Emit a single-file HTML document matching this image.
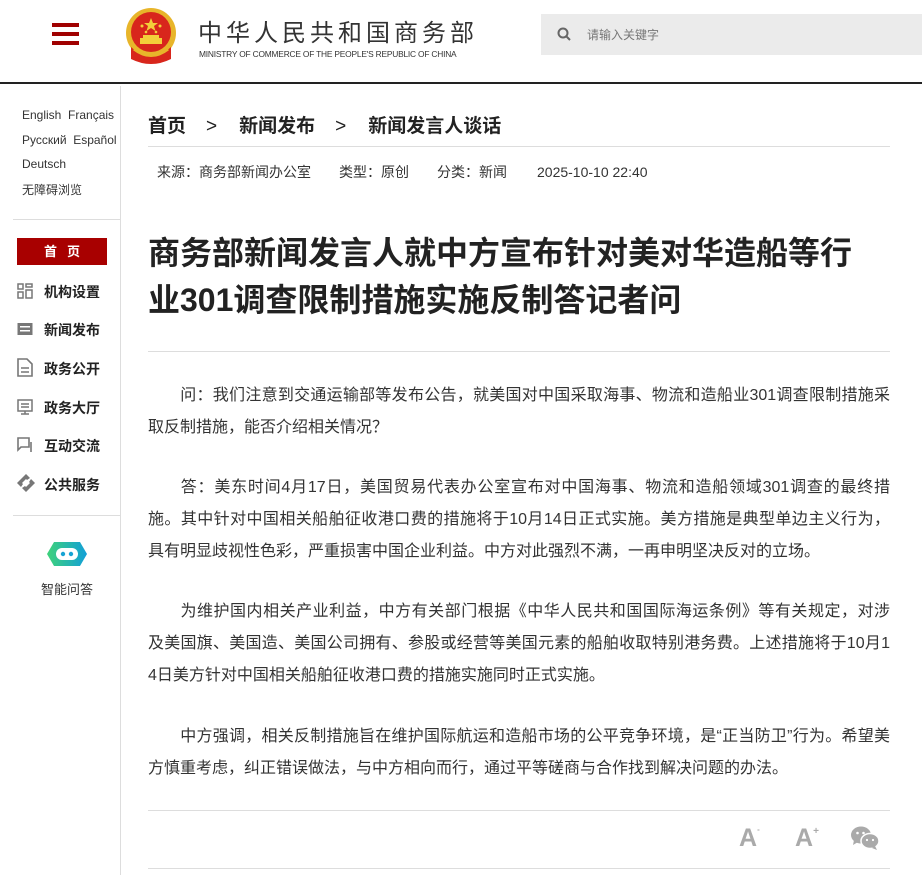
<!DOCTYPE html>
<html><head><meta charset="utf-8"><style>
*{margin:0;padding:0;box-sizing:border-box}
body{width:922px;height:875px;overflow:hidden;background:#fff;font-family:"Liberation Sans","Noto Sans CJK SC",sans-serif;color:#333;position:relative}
.abs{position:absolute}
.hdr{left:0;top:0;width:922px;height:84px;border-bottom:2px solid #222}
.burger span{position:absolute;left:52px;width:27px;height:4px;background:#a00000}
.logo-cn{left:198px;top:13px;font-size:24px;letter-spacing:4px;color:#333;white-space:nowrap}
.logo-en{left:199px;top:49px;font-size:8.4px;color:#333;white-space:nowrap;letter-spacing:-0.2px}
.search{left:541px;top:14px;width:381px;height:41px;background:#ebebeb}
.search .ph{position:absolute;left:46px;top:12px;font-size:12px;color:#777}
.vline{left:120px;top:86px;width:1px;height:789px;background:#ddd}
.lang{left:22px;font-size:12px;color:#333;white-space:nowrap}
.sep{left:13px;width:107px;height:1px;background:#ddd}
.home{left:17px;top:238px;width:90px;height:27px;background:#a80000;color:#fff;font-size:13px;font-weight:bold;text-align:center;line-height:27px;letter-spacing:10px;text-indent:10px}
.nav{left:44px;font-size:14px;font-weight:bold;color:#222;white-space:nowrap}
.ico{left:17px}
.crumb{left:148px;top:111px;font-size:19px;font-weight:bold;color:#222;white-space:nowrap}
.meta{left:157px;top:162px;font-size:14px;color:#333;white-space:nowrap}
.title{left:148px;top:230px;width:740px;font-size:32px;font-weight:bold;line-height:47px;color:#222}
.hl{left:148px;width:742px;height:1px;background:#ddd}
.p{left:148px;width:742px;font-size:16px;line-height:32px;color:#333}
.p div{text-align:justify;text-align-last:justify;white-space:nowrap}
.p div.l{text-align-last:left}
</style></head><body>
<div class="abs hdr"></div>
<div class="burger"><span style="top:23px"></span><span style="top:32px"></span><span style="top:41px"></span></div>
<svg class="abs" style="left:124px;top:7px" width="54" height="58" viewBox="0 0 54 58">
<circle cx="27" cy="26" r="25" fill="#e8b52a"/><circle cx="27" cy="25" r="20" fill="#d8261c"/>
<polygon points="27,11 29,16 34,16 30,19 31.5,24 27,21 22.5,24 24,19 20,16 25,16" fill="#f3cf3a"/>
<circle cx="18" cy="19" r="1.5" fill="#f3cf3a"/><circle cx="36" cy="19" r="1.5" fill="#f3cf3a"/><circle cx="22" cy="25" r="1.3" fill="#f3cf3a"/><circle cx="32" cy="25" r="1.3" fill="#f3cf3a"/>
<rect x="16" y="31" width="22" height="6" fill="#f3cf3a"/><rect x="19" y="28" width="16" height="3" fill="#f3cf3a"/>
<path d="M7 40 Q27 58 47 40 L47 52 Q27 62 7 52Z" fill="#d8261c"/><path d="M10 42 Q27 55 44 42" stroke="#e8b52a" stroke-width="3" fill="none"/>
</svg>
<div class="abs logo-cn">中华人民共和国商务部</div>
<div class="abs logo-en">MINISTRY OF COMMERCE OF THE PEOPLE'S REPUBLIC OF CHINA</div>
<div class="abs search"><svg class="abs" style="left:16px;top:13px" width="14" height="14" viewBox="0 0 14 14"><circle cx="6" cy="6" r="4.5" stroke="#666" stroke-width="2" fill="none"/><path d="M9.5 9.5L13 13" stroke="#666" stroke-width="2"/></svg><span class="ph">请输入关键字</span></div>

<div class="abs vline"></div>
<div class="abs lang" style="top:108px">English&nbsp;&nbsp;Français</div>
<div class="abs lang" style="top:133px">Русский&nbsp;&nbsp;Español</div>
<div class="abs lang" style="top:157px">Deutsch</div>
<div class="abs lang" style="top:181px">无障碍浏览</div>
<div class="abs sep" style="top:219px"></div>
<div class="abs home">首页</div>
<svg class="abs ico" style="top:283px" width="16" height="16" viewBox="0 0 16 16" fill="none" stroke="#777" stroke-width="1.5"><rect x="1" y="1" width="5" height="5"/><rect x="9" y="1" width="6" height="3"/><rect x="1" y="9" width="5" height="6"/><rect x="9" y="7" width="6" height="8"/></svg>
<div class="abs nav" style="top:282px">机构设置</div>
<svg class="abs ico" style="top:322px" width="16" height="14" viewBox="0 0 16 14"><rect x="0.5" y="1" width="15" height="12" fill="#777"/><rect x="3" y="4" width="10" height="1.5" fill="#fff"/><rect x="3" y="8" width="10" height="1.5" fill="#fff"/></svg>
<div class="abs nav" style="top:320px">新闻发布</div>
<svg class="abs ico" style="top:358px" width="16" height="19" viewBox="0 0 16 19" fill="none" stroke="#777" stroke-width="1.6"><path d="M1 1h9l5 5v12H1z"/><path d="M4 10h8M4 14h8"/></svg>
<div class="abs nav" style="top:359px">政务公开</div>
<svg class="abs ico" style="top:399px" width="16" height="16" viewBox="0 0 16 16" fill="none" stroke="#777" stroke-width="1.5"><rect x="1" y="1" width="14" height="11"/><path d="M4 5h8M4 8h8M8 12v3M4 15h8"/></svg>
<div class="abs nav" style="top:398px">政务大厅</div>
<svg class="abs ico" style="top:437px" width="16" height="16" viewBox="0 0 16 16" fill="none" stroke="#777" stroke-width="1.6"><path d="M1 1h11v9H4l-3 3z"/><path d="M14 5v10"/></svg>
<div class="abs nav" style="top:436px">互动交流</div>
<svg class="abs ico" style="top:474px" width="18" height="18" viewBox="0 0 18 18" fill="#777"><path d="M9 0l4 4-3 2-1-1-4 4 1 1-2 3-4-4z"/><path d="M9 18l-4-4 3-2 1 1 4-4-1-1 2-3 4 4z"/></svg>
<div class="abs nav" style="top:475px">公共服务</div>
<div class="abs sep" style="top:515px"></div>
<svg class="abs" style="left:46px;top:541px" width="42" height="26" viewBox="0 0 42 26"><defs><linearGradient id="g" x1="0" x2="1"><stop offset="0" stop-color="#3fd27a"/><stop offset="1" stop-color="#129fd8"/></linearGradient></defs><path d="M8 1h26l7 12-7 12H8L1 13z" fill="url(#g)"/><rect x="10" y="7" width="22" height="12" rx="6" fill="#fff"/><circle cx="17" cy="13" r="2.2" fill="#17a3d4"/><circle cx="25" cy="13" r="2.2" fill="#17a3d4"/></svg>
<div class="abs" style="left:41px;top:579px;font-size:13px;color:#333">智能问答</div>

<div class="abs crumb">首页<span style="font-weight:normal;margin:0 22px 0 20px">&gt;</span>新闻发布<span style="font-weight:normal;margin:0 22px 0 20px">&gt;</span>新闻发言人谈话</div>
<div class="abs hl" style="top:146px"></div>
<div class="abs meta">来源：商务部新闻办公室<span style="margin-left:28px">类型：原创</span><span style="margin-left:28px">分类：新闻</span><span style="margin-left:30px">2025-10-10 22:40</span></div>
<div class="abs title">商务部新闻发言人就中方宣布针对美对华造船等行<br>业301调查限制措施实施反制答记者问</div>
<div class="abs hl" style="top:351px"></div>
<div class="abs p" style="top:380px"><div>&emsp;&emsp;问：我们注意到交通运输部等发布公告，就美国对中国采取海事、物流和造船业301调查限制措施采</div><div class="l">取反制措施，能否介绍相关情况？</div></div>
<div class="abs p" style="top:472px"><div>&emsp;&emsp;答：美东时间4月17日，美国贸易代表办公室宣布对中国海事、物流和造船领域301调查的最终措</div><div>施。其中针对中国相关船舶征收港口费的措施将于10月14日正式实施。美方措施是典型单边主义行为，</div><div class="l">具有明显歧视性色彩，严重损害中国企业利益。中方对此强烈不满，一再申明坚决反对的立场。</div></div>
<div class="abs p" style="top:596px"><div>&emsp;&emsp;为维护国内相关产业利益，中方有关部门根据《中华人民共和国国际海运条例》等有关规定，对涉</div><div>及美国旗、美国造、美国公司拥有、参股或经营等美国元素的船舶收取特别港务费。上述措施将于10月1</div><div class="l">4日美方针对中国相关船舶征收港口费的措施实施同时正式实施。</div></div>
<div class="abs p" style="top:721px"><div>&emsp;&emsp;中方强调，相关反制措施旨在维护国际航运和造船市场的公平竞争环境，是“正当防卫”行为。希望美</div><div class="l">方慎重考虑，纠正错误做法，与中方相向而行，通过平等磋商与合作找到解决问题的办法。</div></div>
<div class="abs hl" style="top:810px"></div>
<div class="abs" style="left:739px;top:824px;font-size:25px;font-weight:bold;color:#aaa">A<sup style="font-size:8px;vertical-align:14px">-</sup></div>
<div class="abs" style="left:795px;top:824px;font-size:25px;font-weight:bold;color:#aaa">A<sup style="font-size:10px;vertical-align:12px">+</sup></div>
<svg class="abs" style="left:850px;top:825px" width="30" height="26" viewBox="0 0 30 26" fill="#aaa"><ellipse cx="11" cy="10" rx="10" ry="8.5"/><path d="M4 15l-1 5 5-3z"/><ellipse cx="20" cy="16" rx="9" ry="7.5" stroke="#fff" stroke-width="1.5"/><path d="M25 21l2 4-5-2z"/><circle cx="7.5" cy="8" r="1.3" fill="#fff"/><circle cx="13.5" cy="8" r="1.3" fill="#fff"/><circle cx="17" cy="15" r="1.1" fill="#fff"/><circle cx="23" cy="15" r="1.1" fill="#fff"/></svg>
<div class="abs hl" style="top:868px"></div>
</body></html>
